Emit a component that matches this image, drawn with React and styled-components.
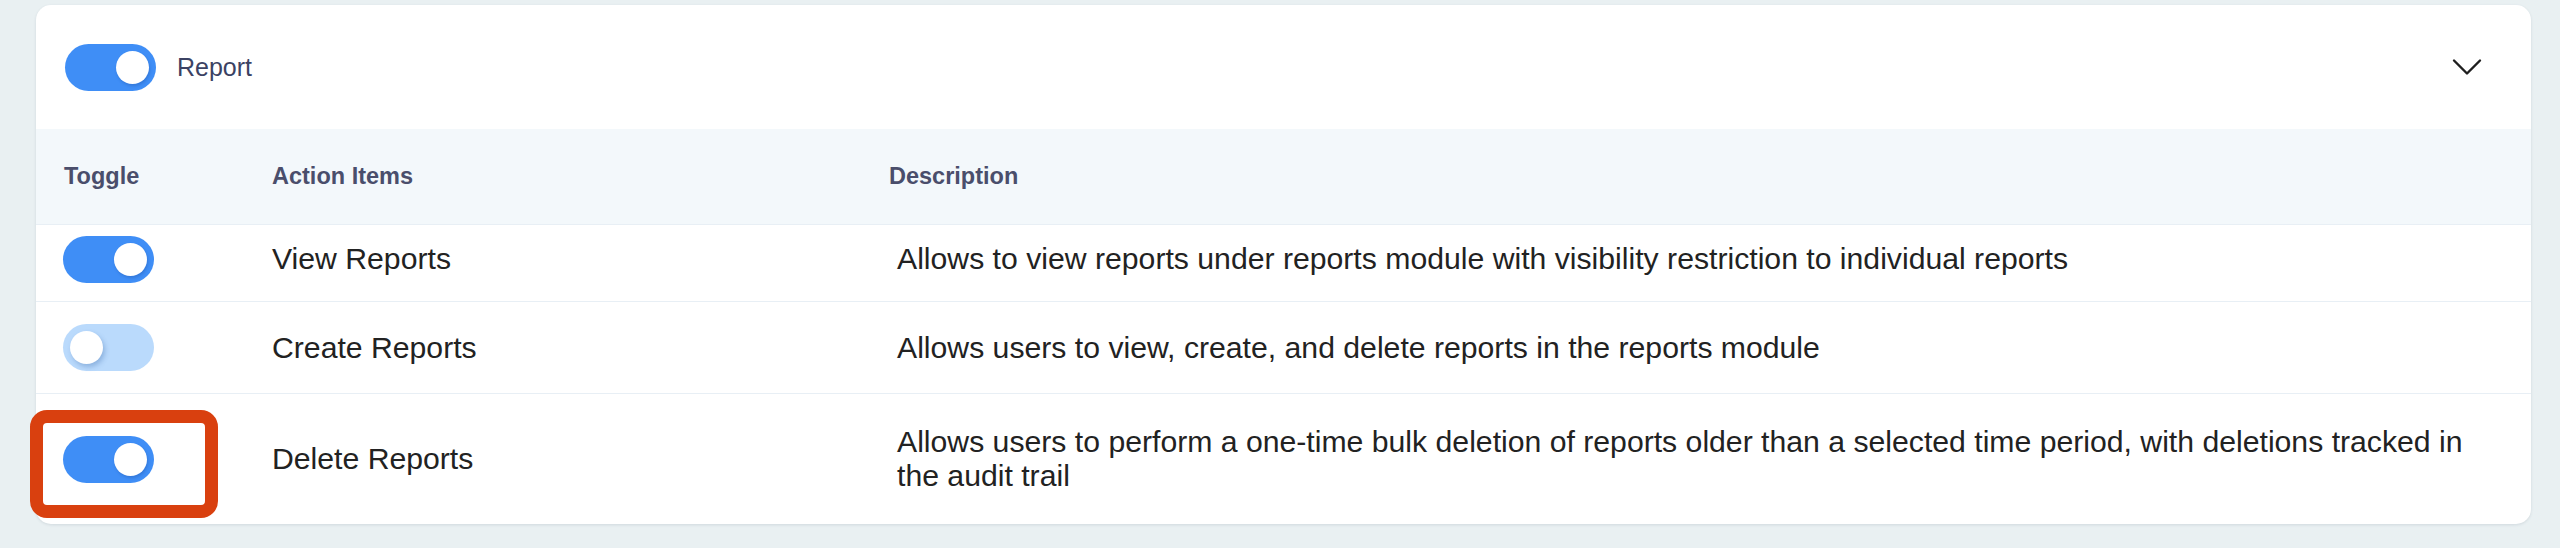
import React from 'react';
import styled, { createGlobalStyle } from 'styled-components';

const GlobalStyle = createGlobalStyle`
  html, body {
    margin: 0;
    padding: 0;
    background: #e9f0f2;
    font-family: "Liberation Sans", Arial, Helvetica, sans-serif;
  }
  * { box-sizing: border-box; }
`

const permissions = [
  {
    name: 'View Reports',
    description: 'Allows to view reports under reports module with visibility restriction to individual reports',
    on: true,
    height: 77,
    scrolled: true,
  },
  {
    name: 'Create Reports',
    description: 'Allows users to view, create, and delete reports in the reports module',
    on: false,
    height: 92,
  },
  {
    name: 'Delete Reports',
    description: 'Allows users to perform a one-time bulk deletion of reports older than a selected time period, with deletions tracked in the audit trail',
    on: true,
    height: 131,
    highlighted: true,
  },
]

function Toggle({ on }) {
  return (
    <Track $on={on}>
      <Knob $on={on} />
    </Track>
  )
}

function Chevron() {
  return (
    <svg width="30" height="18" viewBox="0 0 30 18" fill="none">
      <path d="M2 2.5 L15 15.5 L28 2.5" stroke="#1f1f1f" strokeWidth="2.4" strokeLinecap="round" strokeLinejoin="round" />
    </svg>
  )
}

export default function App() {
  return (
    <Page>
      <GlobalStyle />
      <Card>
        <Header>
          <Toggle on={true} />
          <Title>Report</Title>
          <Spacer />
          <Chevron />
        </Header>

        <HeadRow>
          <HeadCell>Toggle</HeadCell>
          <HeadCell>Action Items</HeadCell>
          <HeadCell>Description</HeadCell>
        </HeadRow>

        {permissions.map((p, i) => (
          <Row key={i} $h={p.height} $scrolled={p.scrolled} $last={i === permissions.length - 1}>
            <ToggleCell>
              <Toggle on={p.on} />
              {p.highlighted && <Highlight />}
            </ToggleCell>
            <Name>{p.name}</Name>
            <Description>{p.description}</Description>
          </Row>
        ))}
      </Card>
    </Page>
  )
}

// ------------------------------------------------------------------------------------

const Page = styled.div`
  padding: 5px 29px 24px 36px;
  min-height: 548px;
`

const Card = styled.div`
  background: #ffffff;
  border-radius: 15px;
  box-shadow: 0 1px 3px rgba(40, 60, 80, 0.12);
`

const Header = styled.div`
  height: 124px;
  display: flex;
  align-items: center;
  padding: 0 49px 0 29px;
  gap: 21px;
`

const Title = styled.span`
  font-size: 25px;
  color: #3b4263;
`

const Spacer = styled.div`
  flex: 1;
`

const Track = styled.div`
  position: relative;
  width: 91px;
  height: 47px;
  border-radius: 24px;
  background: ${p => (p.$on ? '#3f8ef6' : '#badafc')};
  flex-shrink: 0;
`

const Knob = styled.div`
  position: absolute;
  top: 7px;
  left: ${p => (p.$on ? '51px' : '7px')};
  width: 33px;
  height: 33px;
  border-radius: 50%;
  background: #ffffff;
  box-shadow: ${p => (p.$on ? '1px 2px 3px rgba(20, 60, 140, 0.25)' : '2px 3px 5px rgba(40, 90, 160, 0.3)')};
`

const HeadRow = styled.div`
  display: grid;
  grid-template-columns: 208px 617px 1fr;
  align-items: center;
  height: 95px;
  padding: 0 49px 0 28px;
  background: #f3f8fb;
`

const HeadCell = styled.div`
  font-size: 23.5px;
  font-weight: 700;
  color: #4a4e6b;
`

const Row = styled.div`
  display: grid;
  grid-template-columns: 208px 617px 1fr;
  align-items: center;
  min-height: ${p => p.$h}px;
  padding: ${p => (p.$scrolled ? '0 49px 8px 27px' : '0 49px 0 27px')};
  border-top: 1px solid #e8eff5;
`

const ToggleCell = styled.div`
  position: relative;
  width: 91px;
  height: 47px;
`

const Highlight = styled.div`
  position: absolute;
  top: -26px;
  left: -33px;
  width: 188px;
  height: 108px;
  border: 13px solid #d9400f;
  border-radius: 17px;
  pointer-events: none;
`

const Name = styled.div`
  font-size: 30.2px;
  color: #222222;
  padding-left: 1px;
`

const Description = styled.div`
  font-size: 30.2px;
  line-height: 34px;
  color: #222222;
  padding-left: 9px;
`
